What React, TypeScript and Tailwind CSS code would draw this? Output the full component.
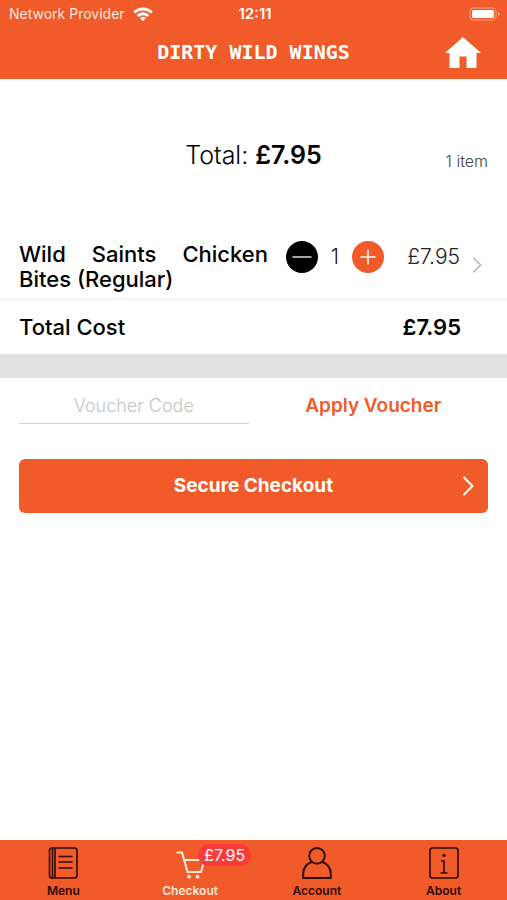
import type { ReactNode } from "react";

function StatusBar() {
  return (
    <div className="grid grid-cols-3 items-center h-7 pl-[9px] pr-1.5 text-[14px] leading-5">
      <div className="flex items-center gap-2 whitespace-nowrap text-[#ffe9df]">
        <span>Network Provider</span>
        <svg viewBox="0 0 20 15" className="w-5 h-[15px] shrink-0" fill="none" stroke="#fff" strokeWidth="2.8">
          <path d="M1.3 5.6a12.3 12.3 0 0 1 17.4 0" />
          <path d="M4.6 9a7.6 7.6 0 0 1 10.8 0" />
          <path d="M10 14.2 6.9 11a4.4 4.4 0 0 1 6.2 0z" fill="#fff" stroke="none" />
        </svg>
      </div>
      <span className="text-center text-[15px] font-semibold">12:11</span>
      <svg viewBox="0 0 32 14" className="w-8 h-3.5 justify-self-end" fill="none">
        <rect x="1" y="1" width="26" height="12" rx="3.5" stroke="#fff" strokeOpacity="0.45" />
        <rect x="3" y="3" width="22" height="8" rx="1.5" fill="#fff" />
        <path d="M29 5v4q1.8-.6 1.8-2T29 5z" fill="#fff" fillOpacity="0.5" />
      </svg>
    </div>
  );
}

function Header() {
  return (
    <header className="bg-[#f15a29] text-white h-[79px]">
      <StatusBar />
      <div className="grid grid-cols-[1fr_auto_1fr] items-center h-12 px-[26px]">
        <h1 className="col-start-2 font-['DejaVu_Sans_Mono',monospace] text-[20px] leading-8 font-bold">
          DIRTY WILD WINGS
        </h1>
        <button type="button" aria-label="Home" className="justify-self-end">
          <svg viewBox="0 0 36 31" className="w-9 h-[31px]" fill="#fff">
            <path d="M18 0 36 16h-4.5v15H21.5V19.5h-7V31h-10V16H0z" />
          </svg>
        </button>
      </div>
    </header>
  );
}

function Chevron({ className }: { className: string }) {
  return (
    <svg viewBox="0 0 12 20" className={className} fill="none" stroke="currentColor" strokeWidth="2">
      <path d="m1.5 1 9 9-9 9" />
    </svg>
  );
}

function BasketItem() {
  return (
    <div className="flex px-[19px] pb-[7px] border-b border-[#f0f0f0]">
      <p className="flex-1 pt-px text-justify text-[22px] leading-[25px] font-medium">
        Wild Saints Chicken Bites (Regular)
      </p>
      <div className="flex items-center h-8 ml-[18px]">
        <button type="button" aria-label="Remove one" className="size-8 rounded-full bg-black">
          <svg viewBox="0 0 32 32" className="size-8" stroke="#ddd" strokeWidth="1.5">
            <path d="M6.5 16h19" />
          </svg>
        </button>
        <span className="w-[34px] text-center text-[21px] font-light text-[#222]">1</span>
        <button type="button" aria-label="Add one" className="size-8 rounded-full bg-[#f15a29]">
          <svg viewBox="0 0 32 32" className="size-8" stroke="#fff" strokeWidth="1.5">
            <path d="M8.5 16h15M16 8.5v15" />
          </svg>
        </button>
        <span className="w-[76px] text-right text-[21px] font-light text-[#222]">£7.95</span>
      </div>
      <Chevron className="w-2.5 h-4 ml-3 mr-1.5 mt-4 text-[#b5b5b5]" />
    </div>
  );
}

function Tab({ label, active, badge, children }: { label: string; active?: boolean; badge?: string; children: ReactNode }) {
  return (
    <a href="#" className={`relative flex flex-col items-center pt-[7px] ${active ? "text-[#ffe9df]" : "text-[#2c0b04]"}`}>
      <svg viewBox="0 0 30 32" className="w-[30px] h-8" fill="none" stroke="currentColor" strokeWidth="1.6">
        {children}
      </svg>
      <span className="mt-1 text-[12px] leading-4 font-semibold">{label}</span>
      {badge && (
        <span className="absolute top-1 left-1/2 ml-2 px-1.5 h-[22px] rounded-full bg-[#fb3b38] text-[16px] leading-[22px] text-white">
          {badge}
        </span>
      )}
    </a>
  );
}

function TabBar() {
  return (
    <nav className="mt-auto grid grid-cols-4 h-[60px] bg-[#f15a29]">
      <Tab label="Menu">
        <rect x="1.5" y="1" width="27.5" height="30" rx="2.5" />
        <path d="M4.5 1v30M7 1v30M10.5 9.5h14M10.5 15h14M10.5 21h14" />
      </Tab>
      <Tab label="Checkout" active badge="£7.95">
        <path d="M1.5 5.5H7L12.5 25H26l3.5-12H9" strokeWidth="2" />
        <circle cx="14" cy="29.7" r="1.9" fill="currentColor" stroke="none" />
        <circle cx="22.5" cy="29.7" r="1.9" fill="currentColor" stroke="none" />
      </Tab>
      <Tab label="Account">
        <circle cx="15" cy="8.8" r="7.8" strokeWidth="1.9" />
        <path d="M9.5 15C4.5 17 1.2 21.5 1.2 27v4h27.6v-4c0-5.5-3.3-10-8.3-12" strokeWidth="1.9" />
      </Tab>
      <Tab label="About">
        <rect x="1" y="1" width="28" height="30" rx="2.5" />
        <path d="M12 14h3v12M11.5 26h7" />
        <circle cx="15" cy="8.3" r="1.6" fill="currentColor" stroke="none" />
      </Tab>
    </nav>
  );
}

export default function App() {
  return (
    <div className="min-h-screen flex flex-col bg-white text-black font-['Inter',sans-serif]">
      <Header />

      <main>
        <section className="grid grid-cols-[1fr_auto_1fr] items-end px-[19px] pt-[60px] pb-[70px]">
          <h2 className="col-start-2 text-[25px] leading-8 font-light">
            Total: <span className="font-semibold">£7.95</span>
          </h2>
          <span className="justify-self-end text-[16px] leading-5 text-[#444] font-light">1 item</span>
        </section>

        <BasketItem />

        <div className="flex justify-between pl-[19px] pr-[46px] py-3 text-[22px] leading-[30px]">
          <span className="font-medium">Total Cost</span>
          <span className="font-semibold">£7.95</span>
        </div>

        <div className="h-6 bg-[#e1e1e2]" />

        <form className="grid grid-cols-2 gap-[10px] px-[19px] pt-2.5">
          <input
            type="text"
            aria-label="Voucher Code"
            placeholder="Voucher Code"
            className="w-full h-9 pb-px border-b border-[#d4d4d4] text-center text-[18px] font-light outline-none placeholder:text-[#c4c4c4]"
          />
          <button type="button" className="h-9 text-[19px] font-semibold text-[#f15a29]">
            Apply Voucher
          </button>
        </form>

        <div className="px-[19px] pt-[35px]">
          <button
            type="button"
            className="grid grid-cols-[1fr_auto_1fr] items-center w-full h-[54px] px-3.5 rounded-md bg-[#f15a29] text-white"
          >
            <span className="col-start-2 text-[19px] font-bold">Secure Checkout</span>
            <Chevron className="w-3 h-5 justify-self-end" />
          </button>
        </div>
      </main>

      <TabBar />
    </div>
  );
}
